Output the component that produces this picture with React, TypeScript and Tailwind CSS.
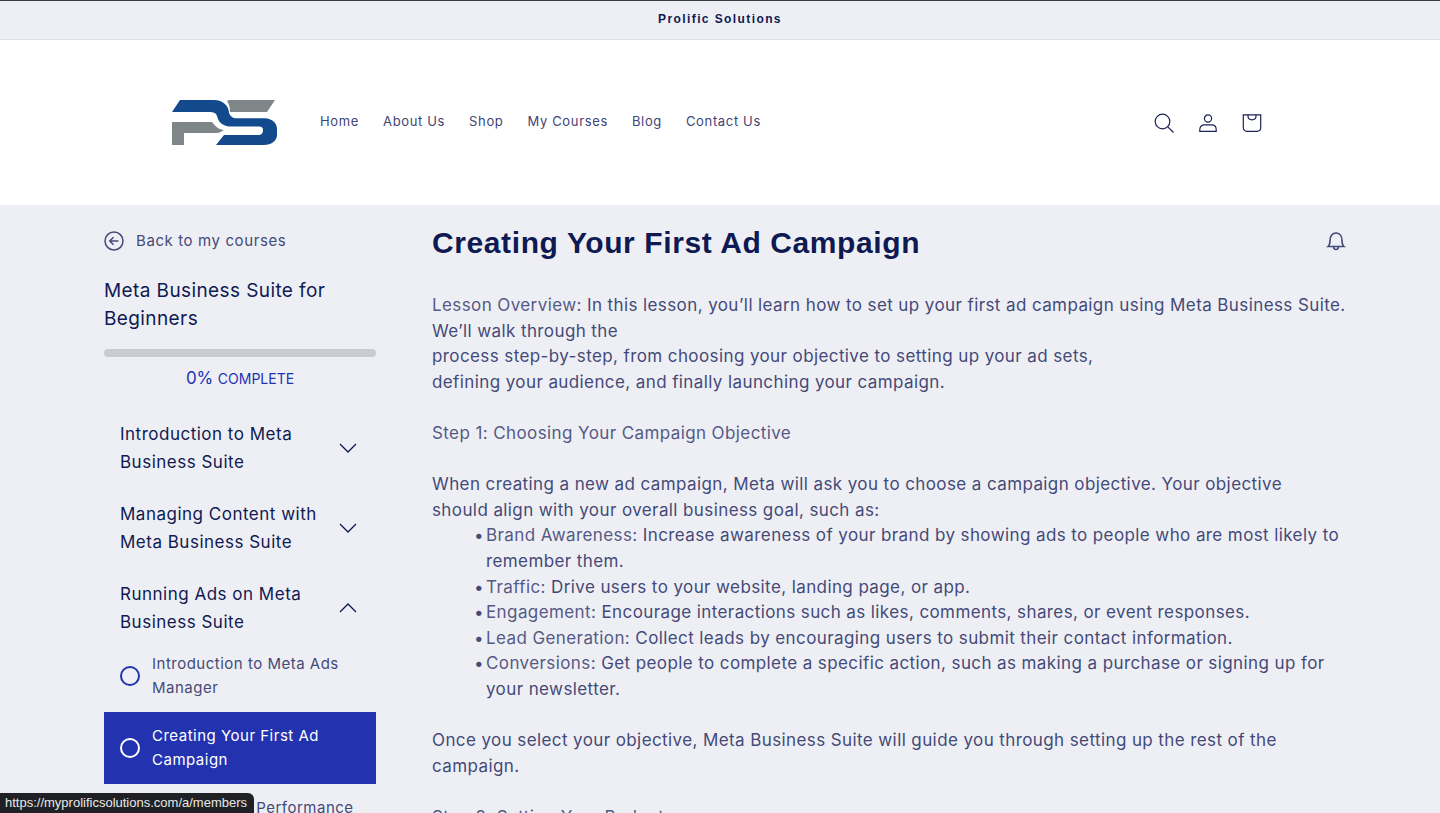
const navLinks = ["Home", "About Us", "Shop", "My Courses", "Blog", "Contact Us"];

const bodyFont = "font-['Inter',sans-serif]";

function Logo() {
  return (
    <svg width="110" height="50" viewBox="22 18 110 50" className="shrink-0">
      <path
        d="M23 32 L31 20 H65 C74 20 80 26 80 33 C81 36 84 38.500 88 38.300 H116 C123 38.500 128 43 128 49 V55 C128 61 122 65 115 65 H67 L75 55 H110 C113 55 114 52 114 50 C114 48 113 46.500 110 46.500 H80 C73 46 69 41 68 36 C67 33 65 32 60 32 Z"
        fill="#134a8e"
      />
      <path d="M80 20 H126 L118 32 H81 C81 27 80 24 78 21 Z" fill="#7f8688" />
      <path d="M23 42 H63 C66 46 70 50 75 50 C72 52 70 53 68 53 H35 V65 H23 Z" fill="#7f8688" />
    </svg>
  );
}

function HeaderIcons() {
  return (
    <div className="flex items-center gap-6 text-[#1c2256]">
      <svg width="20" height="20" viewBox="0 0 20 20" fill="none" stroke="currentColor" strokeWidth="1.200">
        <circle cx="8.500" cy="8.500" r="7.300" />
        <path d="M13.800 13.800 L19.500 19.500" />
      </svg>
      <svg width="20" height="20" viewBox="0 0 20 20" fill="none" stroke="currentColor" strokeWidth="1.200">
        <circle cx="10" cy="5.500" r="3.600" />
        <path d="M1.800 18.300 V16.500 C1.800 13.500 4 11.800 6.500 11.800 H13.500 C16 11.800 18.200 13.500 18.200 16.500 V18.300 Z" />
      </svg>
      <svg width="20" height="20" viewBox="0 0 20 20" fill="none" stroke="currentColor" strokeWidth="1.200">
        <path d="M1.300 1.800 H18.700 V14.500 C18.700 17 17 18.300 15 18.300 H5 C3 18.300 1.300 17 1.300 14.500 Z" />
        <path d="M6 1.800 V3 C6 5.300 7.800 6.800 10 6.800 C12.200 6.800 14 5.300 14 3 V1.800" />
      </svg>
    </div>
  );
}

function Chevron({ up }: { up?: boolean }) {
  return (
    <svg width="18" height="10" viewBox="0 0 18 10" fill="none" stroke="#0f1a52" strokeWidth="1.300" className="shrink-0">
      <path d={up ? "M1 9 L9 1 L17 9" : "M1 1 L9 9 L17 1"} />
    </svg>
  );
}

function Section({ title, open }: { title: string; open?: boolean }) {
  return (
    <div className="flex items-center justify-between pl-4 pr-[19px] py-3">
      <span className="w-[215px] text-[17px] leading-7 tracking-[0.5px] text-[#0f1a52]">{title}</span>
      <Chevron up={open} />
    </div>
  );
}

function Lesson({ title, active }: { title: string; active?: boolean }) {
  return (
    <div
      className={
        active
          ? "flex h-[72px] items-center gap-3 bg-[#2333b0] pl-4 pr-3 text-white"
          : "flex h-[72px] items-center gap-3 pl-4 pr-3 text-[#444a78]"
      }
    >
      <span
        className={
          active
            ? "h-5 w-5 shrink-0 rounded-full border-2 border-white"
            : "h-5 w-5 shrink-0 rounded-full border-2 border-[#2333b0]"
        }
      />
      <span className="text-[15px] leading-6 tracking-[0.5px]">{title}</span>
    </div>
  );
}

function Sidebar() {
  return (
    <aside className="w-[272px] shrink-0 pt-[5px]">
      <div className="flex items-center gap-3 text-[#444a78]">
        <svg width="20" height="20" viewBox="0 0 20 20" fill="none" stroke="currentColor" strokeWidth="1.500">
          <circle cx="10" cy="10" r="9" />
          <path d="M14.500 10 H6 M9.500 6.300 L5.800 10 L9.500 13.700" />
        </svg>
        <span className="text-[15px] leading-6 tracking-[0.6px]">Back to my courses</span>
      </div>
      <h2 className="mt-[24px] text-[19px] leading-7 tracking-[0.4px] text-[#0f1a52]">
        Meta Business Suite for Beginners
      </h2>
      <div className="mt-4 h-2 rounded-full bg-[#c9ccd3]" />
      <p className="mt-[9px] text-center leading-6 text-[#2333b0]">
        <span className="text-[17px]">0%</span> <span className="text-[14px]">COMPLETE</span>
      </p>
      <div className="mt-[17px]">
        <Section title="Introduction to Meta Business Suite" />
        <Section title="Managing Content with Meta Business Suite" />
        <Section title="Running Ads on Meta Business Suite" open />
        <div className="-mt-2">
          <Lesson title="Introduction to Meta Ads Manager" />
          <Lesson title="Creating Your First Ad Campaign" active />
          <Lesson title="Analyzing Ad Performance Results" />
        </div>
      </div>
    </aside>
  );
}

function Bullet({ label, text }: { label: string; text: string }) {
  return (
    <li className="flex">
      <span className="w-[14px] shrink-0 text-center">•</span>
      <span>
        <span className="text-[#555a85]">{label}:</span> {text}
      </span>
    </li>
  );
}

function LessonContent() {
  return (
    <section className="min-w-0 flex-1">
      <div className="flex items-start justify-between">
        <h1 className="font-['Liberation_Sans',sans-serif] text-[30px] leading-[38px] font-bold tracking-[0.6px] text-[#0f1a52]">
          Creating Your First Ad Campaign
        </h1>
        <svg width="20" height="20" viewBox="0 0 20 20" fill="none" stroke="#444a78" strokeWidth="1.600" className="mt-[7px] mr-1">
          <path d="M2 15.500 C3.800 14 4 12.500 4 9.500 C4 5 6.500 2 10 2 C13.500 2 16 5 16 9.500 C16 12.500 16.200 14 18 15.500 Z" />
          <path d="M7.500 15.500 C7.500 17.500 8.800 18.500 10 18.500 C11.200 18.500 12.500 17.500 12.500 15.500" />
        </svg>
      </div>
      <div className="mt-[31px] text-[17px] leading-[25.600px] tracking-[0.4px] text-[#444a78]">
        <p>
          <span className="text-[#555a85]">Lesson Overview:</span> In this lesson, you’ll learn how to set up your first
          ad campaign using Meta Business Suite. We’ll walk through the
          <br />
          process step-by-step, from choosing your objective to setting up your ad sets,
          <br />
          defining your audience, and finally launching your campaign.
        </p>
        <p className="mt-[25.600px] text-[#555a85]">Step 1: Choosing Your Campaign Objective</p>
        <p className="mt-[25.600px]">
          When creating a new ad campaign, Meta will ask you to choose a campaign objective. Your objective
          <br />
          should align with your overall business goal, such as:
        </p>
        <ul className="pl-10">
          <Bullet
            label="Brand Awareness"
            text="Increase awareness of your brand by showing ads to people who are most likely to remember them."
          />
          <Bullet label="Traffic" text="Drive users to your website, landing page, or app." />
          <Bullet
            label="Engagement"
            text="Encourage interactions such as likes, comments, shares, or event responses."
          />
          <Bullet
            label="Lead Generation"
            text="Collect leads by encouraging users to submit their contact information."
          />
          <Bullet
            label="Conversions"
            text="Get people to complete a specific action, such as making a purchase or signing up for your newsletter."
          />
        </ul>
        <p className="mt-[25.600px]">
          Once you select your objective, Meta Business Suite will guide you through setting up the rest of the campaign.
        </p>
        <p className="mt-[25.600px] text-[#555a85]">Step 2: Setting Your Budget</p>
      </div>
    </section>
  );
}

export default function App() {
  return (
    <div className={`relative h-[813px] overflow-hidden bg-[#eeeff5] ${bodyFont}`}>
      <div className="flex h-10 items-center justify-center border-t border-b border-t-[#3a3a3a] border-b-[#dfe0e5] pb-[2px] font-['Liberation_Sans',sans-serif] text-[12px] font-bold tracking-[1.400px] text-[#0f1a52]">
        Prolific Solutions
      </div>
      <header className="flex h-[165px] items-center bg-white pr-[178px] pl-[171px]">
        <Logo />
        <nav className="mb-[2px] ml-[39px] flex gap-6 text-[13px] tracking-[0.65px] text-[#3f4576]">
          {navLinks.map((link) => (
            <span key={link}>{link}</span>
          ))}
        </nav>
        <div className="ml-auto">
          <HeaderIcons />
        </div>
      </header>
      <main className="flex gap-14 pt-[19px] pr-[90px] pl-[104px]">
        <Sidebar />
        <LessonContent />
      </main>
      <div className="absolute bottom-0 left-0 flex h-[20px] items-center rounded-tr-md bg-[#202124] pr-[7px] pl-[5px] font-['Liberation_Sans',sans-serif] text-[13px] text-[#e8e8e8]">
        https://myprolificsolutions.com/a/members
      </div>
    </div>
  );
}
